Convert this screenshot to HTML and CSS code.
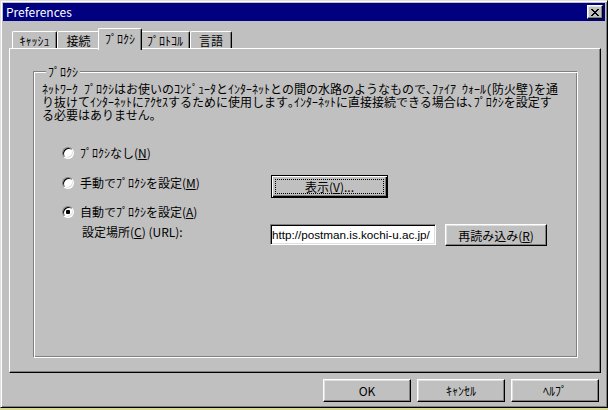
FILE: index.html
```html
<!DOCTYPE html>
<html lang="ja">
<head>
    <meta charset="UTF-8">
    <meta name="viewport" content="width=device-width, initial-scale=1.0">
    <title>Preferences</title>

    <link rel="stylesheet" href="styles.css">
</head>
<body>
    <div class="window">
        <div class="titlebar">
            <span class="title">Preferences</span>
            <button class="close">
                <svg width="8" height="7" viewBox="0 0 8 7" shape-rendering="crispEdges">
                    <path d="M0 0h2v1h-2z M6 0h2v1h-2z M1 1h2v1h-2z M5 1h2v1h-2z M2 2h4v1h-4z M3 3h2v1h-2z M2 4h4v1h-4z M1 5h2v1h-2z M5 5h2v1h-2z M0 6h2v1h-2z M6 6h2v1h-2z" fill="#000"/>
                </svg>
            </button>
        </div>

        <div class="tabs">
            <div class="tab">ｷｬｯｼｭ</div>
            <div class="tab">接続</div>
            <div class="tab active">ﾌﾟﾛｸｼ</div>
            <div class="tab">ﾌﾟﾛﾄｺﾙ</div>
            <div class="tab">言語</div>
        </div>

        <div class="panel">
            <fieldset class="group">
                <legend>ﾌﾟﾛｸｼ</legend>
                <p class="desc">ﾈｯﾄﾜｰｸ ﾌﾟﾛｸｼはお使いのｺﾝﾋﾟｭｰﾀとｲﾝﾀｰﾈｯﾄとの間の水路のようなもので､ﾌｧｲｱ ｳｫｰﾙ(防火壁)を通<br>り抜けてｲﾝﾀｰﾈｯﾄにｱｸｾｽするために使用します｡ｲﾝﾀｰﾈｯﾄに直接接続できる場合は､ﾌﾟﾛｸｼを設定す<br>る必要はありません｡</p>

                <div class="row first">
                    <div class="choice"><span class="radio"></span><span class="label">ﾌﾟﾛｸｼなし(<u>N</u>)</span></div>
                </div>
                <div class="row manual">
                    <div class="choice"><span class="radio"></span><span class="label">手動でﾌﾟﾛｸｼを設定(<u>M</u>)</span></div>
                    <button class="btn default view"><span class="focus">表示(<u>V</u>)...</span></button>
                </div>
                <div class="row auto">
                    <div class="choice"><span class="radio checked"></span><span class="label">自動でﾌﾟﾛｸｼを設定(<u>A</u>)</span></div>
                </div>
                <div class="row url">
                    <div class="choice"><span class="label">設定場所(<u>C</u>) (URL):</span></div>
                    <input class="field" type="text" value="http://postman.is.kochi-u.ac.jp/">
                    <button class="btn reload">再読み込み(<u>R</u>)</button>
                </div>
            </fieldset>
        </div>

        <div class="actions">
            <button class="btn">OK</button>
            <button class="btn">ｷｬﾝｾﾙ</button>
            <button class="btn">ﾍﾙﾌﾟ</button>
        </div>
    </div>
</body>
</html>
```

FILE: styles.css
```css
*{
    margin: 0;
    padding: 0;
    box-sizing: border-box;
}
body{
    width: 608px;
    height: 410px;
    overflow: hidden;
    background-color: #d8d890;
    font-family: "Noto Sans CJK JP", "Noto Sans", sans-serif;
    font-size: 12px;
    color: #000;
}
button, input{
    font: inherit;
    color: #000;
}

/* window frame */
.window{
    width: 608px;
    height: 408px;
    background-color: #c0c0c0;
    border: 1px solid;
    border-color: #dfdfdf #000 #000 #dfdfdf;
    box-shadow: inset 1px 1px #fff, inset -1px -1px #808080;
    padding: 2px;
    display: flex;
    flex-direction: column;
}
.titlebar{
    height: 18px;
    background-color: #000080;
    color: #fff;
    display: flex;
    align-items: center;
    justify-content: space-between;
    padding: 0 2px 0 3px;
}
.title{
    line-height: 18px;
}
.close{
    width: 16px;
    height: 14px;
    background-color: #c0c0c0;
    border: 1px solid;
    border-color: #fff #000 #000 #fff;
    box-shadow: inset -1px -1px #808080, inset 1px 1px #dfdfdf;
    display: flex;
    align-items: center;
    justify-content: center;
}

/* tabs */
.tabs{
    display: flex;
    align-items: flex-end;
    height: 20px;
    margin-top: 7px;
    padding-left: 9px;
}
.tab{
    height: 17px;
    border-top: 1px solid #fff;
    border-left: 1px solid #fff;
    border-right: 1px solid #000;
    border-radius: 2px 2px 0 0;
    box-shadow: inset -1px 0 #808080;
    display: flex;
    align-items: center;
    justify-content: center;
    line-height: 13px;
}
.tab:nth-child(1){ width: 45px; }
.tab:nth-child(2){ width: 43px; }
.tab:nth-child(3){ width: 44px; }
.tab:nth-child(4){ width: 50px; }
.tab:nth-child(5){ width: 42px; }
.tab.active{
    position: relative;
    z-index: 1;
    height: 22px;
    margin: 0 -2px -2px;
    padding-bottom: 2px;
    background-color: #c0c0c0;
}

.panel{
    height: 325px;
    margin: 0 4px 0 6px;
    border: 1px solid;
    border-color: #fff #000 #000 #fff;
    box-shadow: inset -1px -1px #808080;
    padding: 16px 22px 0 23px;
}

/* group box */
.group{
    height: 293px;
    min-width: 0;
    border: 1px solid;
    border-color: #808080 #fff #fff #808080;
    box-shadow: inset 1px 1px #fff, inset -1px -1px #808080;
    padding: 4px 0 0 8px;
}
.group legend{
    margin-left: 4px;
    padding: 0 2px;
    line-height: 13px;
    background-color: #c0c0c0;
}
.desc{
    line-height: 13px;
    white-space: nowrap;
    font-feature-settings: "hwid";
}

.row{
    display: flex;
    align-items: flex-start;
}
.row.first{ margin-top: 25px; }
.row.manual{ margin-top: 16px; }
.row.auto{ margin-top: 7px; }
.row.url{ margin-top: 6px; }

.choice{
    width: 228px;
    height: 13px;
    display: flex;
    align-items: center;
    padding-left: 20px;
    white-space: nowrap;
}
.manual .choice{ margin-top: 1px; }
.url .choice{
    padding-left: 40px;
    margin-top: 1px;
}
.label{
    line-height: 13px;
}
.radio + .label{
    margin-left: 6px;
}
.radio{
    width: 12px;
    height: 12px;
    flex: none;
    border-radius: 50%;
    border: 1px solid;
    border-color: #808080 #fff #fff #808080;
    box-shadow: inset 1px 1px #000, inset -1px -1px #dfdfdf;
    background-color: #fff;
    display: flex;
    align-items: center;
    justify-content: center;
}
.radio.checked::after{
    content: "";
    width: 4px;
    height: 4px;
    border-radius: 1px;
    background-color: #000;
}

/* buttons */
.btn{
    height: 23px;
    background-color: #c0c0c0;
    border: 1px solid;
    border-color: #fff #000 #000 #fff;
    box-shadow: inset -1px -1px #808080, inset 1px 1px #dfdfdf;
    line-height: 13px;
}
.btn.default{
    border-color: #000;
    box-shadow: inset 1px 1px #fff, inset -1px -1px #000, inset -2px -2px #808080;
    padding: 3px;
    display: flex;
}
.focus{
    flex: 1;
    border: 1px dotted #000;
    display: flex;
    align-items: center;
    justify-content: center;
}
.view{
    width: 117px;
    margin-left: 1px;
}
.field{
    width: 166px;
    height: 21px;
    border: 1px solid;
    border-color: #808080 #fff #fff #808080;
    box-shadow: inset 1px 1px #000, inset -1px -1px #dfdfdf;
    background-color: #fff;
    padding: 0 0 0 1px;
    outline: none;
    font-family: "Liberation Sans", Arial, sans-serif;
    font-size: 11.7px;
}
.reload{
    width: 102px;
    height: 22px;
    margin-left: 9px;
}

.actions{
    display: flex;
    justify-content: flex-end;
    gap: 6px;
    margin-top: 6px;
    padding-right: 6px;
}
.actions .btn{
    width: 88px;
}
```
